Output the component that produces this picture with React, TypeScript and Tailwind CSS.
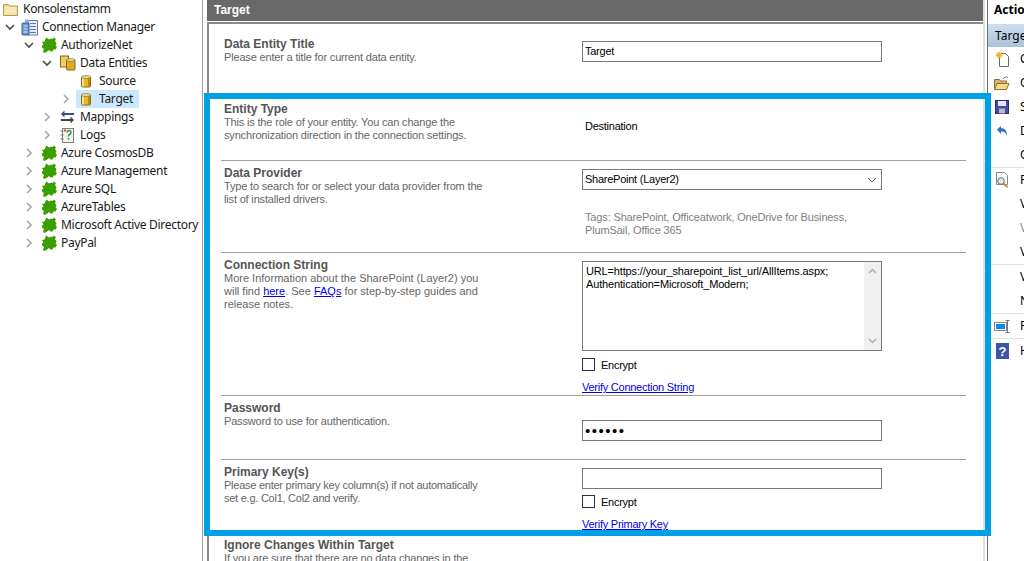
import React from "react";

const Chevron = ({ open }: { open?: boolean }) => (
  <svg width="10" height="10" viewBox="0 0 10 10" fill="none" strokeWidth="1.6" stroke={open ? "#4a4a4a" : "#a6a6a6"}>
    {open ? <path d="M1 3l4 4 4-4" /> : <path d="M3 1l4 4-4 4" />}
  </svg>
);

const Puzzle = () => (
  <svg width="16" height="16" viewBox="0 0 16 16">
    <path
      fill="#3c9f00"
      d="M5.500 0.500l2.500 2 2-1 1.500 0.500 1.500-1.500 2 2-1 1.500 1.500 2.500-1 2 1.500 1.500-1.500 2.500-2 0-1 2-2 0-1.500-1.500-2.500 2-2.500 1-1-1.500 1-2.500-2-1.500 0-2 1.500-1-1.500-2.500 2.500-0.500 1-2.500z"
    />
  </svg>
);

const Db = () => (
  <svg width="10" height="13" viewBox="0 0 10 13">
    <rect x="0.500" y="1.500" width="9" height="10.500" rx="1" fill="#e8b820" stroke="#7d6a2a" />
    <rect x="1" y="2" width="2" height="9.500" fill="#f8e38c" />
    <rect x="7" y="2" width="2" height="9.500" fill="#c08a10" />
    <ellipse cx="5" cy="2" rx="4.500" ry="1.400" fill="#f7e6a0" stroke="#7d6a2a" strokeWidth="0.700" />
  </svg>
);

const DbPair = () => (
  <svg width="16" height="16" viewBox="0 0 16 16">
    <rect x="0.500" y="1" width="8" height="11" fill="#f2cf5a" stroke="#7d6a2a" />
    <rect x="6.500" y="4.500" width="8.500" height="10.500" rx="1" fill="#e3ac1c" stroke="#7d6a2a" />
    <ellipse cx="10.800" cy="5" rx="4.200" ry="1.300" fill="#f7e6a0" stroke="#7d6a2a" strokeWidth="0.700" />
  </svg>
);

const Folder = () => (
  <svg width="15" height="14" viewBox="0 0 15 14">
    <path d="M0.500 2.500h5l1.500 1.500h7.500v9.500h-14z" fill="#f5d98a" stroke="#b59a55" />
    <rect x="1.500" y="5" width="12" height="7.500" fill="#fae9b5" />
  </svg>
);

const Conn = () => (
  <svg width="17" height="17" viewBox="0 0 17 17">
    <rect x="7.500" y="1.500" width="9" height="14.500" fill="#e6ecf5" stroke="#6a7fa5" />
    <path d="M9 4.500h6M9 7.500h6M9 10.500h6M9 13.500h6" stroke="#5b77b5" />
    <path d="M4 0.500h4v3h-4z" fill="#8fb0e0" />
    <rect x="1" y="4" width="7" height="12" rx="1" fill="#6f96d6" stroke="#3b5a95" />
    <path d="M2.500 7h4M2.500 10h4M2.500 13h4" stroke="#d9e5f7" />
  </svg>
);

const Mappings = () => (
  <svg width="15" height="14" viewBox="0 0 15 14">
    <path d="M14 4H3" stroke="#33507f" strokeWidth="2" />
    <path d="M4.500 0.500L1 4l3.500 3.500z" fill="#33507f" />
    <path d="M1 10h11" stroke="#444" strokeWidth="2" />
    <path d="M10.500 6.500L14 10l-3.500 3.500z" fill="#444" />
  </svg>
);

const Logs = () => (
  <svg width="14" height="15" viewBox="0 0 14 15">
    <rect x="2.500" y="0.500" width="11" height="14" fill="#f4f4f0" stroke="#808080" />
    <path d="M0.500 3h3M0.500 7h3M0.500 11h3" stroke="#777" />
    <path d="M7 4.500a2 2 0 1 1 2.500 2c-.8.400-1 1-1 2" fill="none" stroke="#2f9a2f" strokeWidth="1.500" />
    <rect x="7.800" y="10" width="1.500" height="1.700" fill="#2f9a2f" />
    <rect x="4" y="1.500" width="2" height="2" fill="#d94b3a" />
  </svg>
);

type RowProps = {
  pl: string;
  chevron?: "open" | "closed";
  icon: React.ReactNode;
  label: string;
  selected?: boolean;
  iconClass: string;
  cell?: string;
};

const TreeRow = ({ pl, chevron, icon, label, selected, iconClass, cell = "w-[22px]" }: RowProps) => (
  <div className={`flex h-[18px] items-center ${pl}`}>
    <div className="flex w-[20px] shrink-0 items-center justify-center">
      {chevron && <Chevron open={chevron === "open"} />}
    </div>
    <div className={`flex h-[18px] items-center pr-[6px] ${selected ? "bg-[#cce8ff]" : ""}`}>
      <div className={`flex ${cell} shrink-0 items-center ${iconClass}`}>{icon}</div>
      <span className="whitespace-nowrap">{label}</span>
    </div>
  </div>
);

const small = "text-[11px] tracking-[-0.25px]";

const Field = ({ title, h, children, right, pt = "pt-[6px]", track = "tracking-[-0.17px]" }: { title: string; h: string; children: React.ReactNode; right: React.ReactNode; pt?: string; track?: string }) => (
  <div className={`flex ${h} shrink-0 border-b border-[#a0a0a0]`}>
    <div className={`w-[361px] shrink-0 pl-[3px] ${pt}`}>
      <div className="text-[12px] font-bold leading-[13px] text-[#555555]">{title}</div>
      <div className={`w-[264px] text-[11px] ${track} leading-[13px] text-[#666666]`}>{children}</div>
    </div>
    <div className="w-[300px] shrink-0">{right}</div>
  </div>
);

const boxText = `h-[21px] w-[300px] border border-[#7a7a7a] bg-white px-[2px] leading-[19px] text-black outline-none`;

const Encrypt = ({ mt }: { mt: string }) => (
  <label className={`flex h-[13px] items-center gap-[6px] ${mt}`}>
    <span className="h-[13px] w-[13px] border border-[#333333] bg-white" />
    <span className={`${small} mt-[2px] text-black`}>Encrypt</span>
  </label>
);

const LinkText = ({ children, mt }: { children: React.ReactNode; mt: string }) => (
  <a href="#" className={`block ${small} leading-[13px] text-[#0000ee] underline ${mt}`}>{children}</a>
);

const FloppyIcon = () => (
  <svg width="14" height="14" viewBox="0 0 14 14">
    <rect x="0.500" y="0.500" width="13" height="13" fill="#4a4aa5" stroke="#2a2a70" />
    <rect x="3" y="1" width="8" height="5" fill="#e8e8f5" />
    <rect x="4" y="8.500" width="6" height="5" fill="#b8b8c8" />
  </svg>
);

const actionRows: { text: string; icon?: React.ReactNode; grey?: boolean; sep?: boolean }[] = [
  {
    text: "Create",
    icon: (
      <svg width="15" height="16" viewBox="0 0 15 16">
        <path d="M4.500 2.500h6l3 3v10h-9z" fill="#fff" stroke="#667" />
        <path d="M4 0l1 2 2-1-1 2 2 1.500-2 .5 1 2-2-1-1 2-1-2-2 1 1-2-2-.5 2-1.500-1-2 2 1z" fill="#f6b820" />
      </svg>
    ),
  },
  {
    text: "Open",
    icon: (
      <svg width="16" height="15" viewBox="0 0 16 15">
        <path d="M0.500 3.500h5l1 1.500h6v8.500h-12z" fill="#d8b868" stroke="#8a7235" />
        <path d="M3 7.500h12l-2.500 6h-12z" fill="#f6d98a" stroke="#8a7235" />
        <path d="M9 3c1-2 3-2.500 5-1.500" fill="none" stroke="#5b77a5" />
      </svg>
    ),
  },
  { text: "Save", icon: <FloppyIcon /> },
  {
    text: "Discard",
    icon: (
      <svg width="12" height="12" viewBox="0 0 12 12">
        <path d="M1 4.500L5 1v2.300c4 0 6 2.500 6 7.700-1-3.500-2.500-4.500-6-4.500V9z" fill="#2f6fc0" />
      </svg>
    ),
  },
  { text: "Open", sep: true },
  {
    text: "Preview",
    icon: (
      <svg width="15" height="16" viewBox="0 0 15 16">
        <path d="M1.500 0.500h8l3 3v9h-11z" fill="#fff" stroke="#888" />
        <circle cx="6" cy="9" r="3.300" fill="#dfe9f5" stroke="#6a6a6a" />
        <path d="M8.500 11.500l4 3.500" stroke="#c08a30" strokeWidth="2" />
      </svg>
    ),
  },
  { text: "Validate" },
  { text: "Verify", grey: true },
  { text: "View", sep: true },
  { text: "View" },
  { text: "New", sep: true },
  {
    text: "Refresh",
    sep: true,
    icon: (
      <svg width="16" height="13" viewBox="0 0 16 13">
        <rect x="0.500" y="2.500" width="12" height="8" fill="#fff" stroke="#888" />
        <rect x="2" y="4" width="9" height="5" fill="#1187f0" />
        <path d="M11.500 0.500h4M11.500 12.500h4M13.500 0.500v12" stroke="#777" />
      </svg>
    ),
  },
  {
    text: "Help",
    icon: (
      <svg width="13" height="16" viewBox="0 0 13 16">
        <rect width="13" height="16" fill="#3b55a8" />
        <text x="6.500" y="12.500" textAnchor="middle" fontSize="13" fontWeight="700" fill="#fff" fontFamily="Liberation Sans, sans-serif">?</text>
      </svg>
    ),
  },
];

export default function App() {
  return (
    <div className="relative flex h-[561px] w-[1024px] overflow-hidden bg-white font-['Liberation_Sans',Arial,sans-serif]">
      {/* Tree */}
      <div className="h-full w-[202px] shrink-0 overflow-hidden font-['Noto_Sans','Open_Sans',sans-serif] text-[12px] leading-[18px] tracking-[-0.3px] text-[#1a1a1a]">
        <div className="flex h-[18px] items-center pl-[3px]">
          <div className="flex w-[20px] shrink-0 items-center"><Folder /></div>
          <span>Konsolenstamm</span>
        </div>
        <TreeRow pl="pl-0" chevron="open" icon={<Conn />} iconClass="pl-[1px]" label="Connection Manager" />
        <TreeRow pl="pl-[19px]" chevron="open" icon={<Puzzle />} iconClass="pl-[2px]" label="AuthorizeNet" />
        <TreeRow pl="pl-[37px]" chevron="open" icon={<DbPair />} iconClass="pl-[3px]" cell="w-[23px]" label="Data Entities" />
        <TreeRow pl="pl-[56px]" icon={<Db />} iconClass="pl-[5px]" cell="w-[23px]" label="Source" />
        <TreeRow pl="pl-[56px]" chevron="closed" icon={<Db />} iconClass="pl-[5px]" cell="w-[23px]" label="Target" selected />
        <TreeRow pl="pl-[37px]" chevron="closed" icon={<Mappings />} iconClass="pl-[3px]" cell="w-[23px]" label="Mappings" />
        <TreeRow pl="pl-[37px]" chevron="closed" icon={<Logs />} iconClass="pl-[3px]" cell="w-[23px]" label="Logs" />
        {["Azure CosmosDB", "Azure Management", "Azure SQL", "AzureTables", "Microsoft Active Directory", "PayPal"].map((t) => (
          <TreeRow key={t} pl="pl-[19px]" chevron="closed" icon={<Puzzle />} iconClass="pl-[2px]" label={t} />
        ))}
      </div>

      {/* Splitter */}
      <div className="h-full w-[5px] shrink-0 border-l border-[#a0a0a0] bg-white" />

      {/* Main */}
      <div className="flex h-full w-[776px] shrink-0 flex-col overflow-hidden">
        <div className="h-[21px] shrink-0 bg-[#696969] pl-[7px] text-[12px] font-bold leading-[20px] text-white">Target</div>
        <div className="mt-px flex-1 overflow-hidden border-l-2 border-t-2 border-[#8a8a8a] pl-[12px] pr-[17px] pt-[8px]">
          <Field
            title="Data Entity Title"
            h="h-[65px]"
            right={<input readOnly value="Target" className={`${boxText} ${small} mt-[9px] block pb-[2px]`} />}
          >
            Please enter a title for current data entity.
          </Field>
          <Field
            title="Entity Type"
            h="h-[64px]"
            right={<div className={`mt-[22px] pl-[3px] ${small} leading-[14px] text-black`}>Destination</div>}
          >
            This is the role of your entity. You can change the synchronization direction in the connection settings.
          </Field>
          <Field
            title="Data Provider"
            h="h-[92px]"
            right={
              <div>
                <div className={`${boxText} ${small} mt-[8px] flex items-center justify-between pr-[4px]`}>
                  <span>SharePoint (Layer2)</span>
                  <svg width="10" height="6" viewBox="0 0 10 6" fill="none" stroke="#555"><path d="M1 1l4 4 4-4" /></svg>
                </div>
                <div className="mt-[21px] pl-[3px] text-[11px] leading-[13px] tracking-[-0.15px] text-[#808080]">
                  Tags: SharePoint, Officeatwork, OneDrive for Business, PlumSail, Office 365
                </div>
              </div>
            }
          >
            Type to search for or select your data provider from the list of installed drivers.
          </Field>
          <Field
            title="Connection String"
            h="h-[143px]"
            track="tracking-[0px]"
            right={
              <div>
                <div className="mt-[8px] flex h-[90px] w-[300px] border border-[#7a7a7a] bg-white">
                  <div className="flex-1 pl-[3px] pt-[3px] text-[11px] leading-[13px] tracking-[-0.15px] text-black">
                    URL=https://your_sharepoint_list_url/AllItems.aspx; <br />Authentication=Microsoft_Modern;
                  </div>
                  <div className="flex w-[17px] flex-col items-center justify-between bg-[#f0f0f0] py-[6px]">
                    <svg width="9" height="6" viewBox="0 0 9 6" fill="none" stroke="#b0b0b0" strokeWidth="1.500"><path d="M1 5l3.500-3.500L8 5" /></svg>
                    <svg width="9" height="6" viewBox="0 0 9 6" fill="none" stroke="#b0b0b0" strokeWidth="1.500"><path d="M1 1l3.500 3.500L8 1" /></svg>
                  </div>
                </div>
                <Encrypt mt="mt-[7px]" />
                <LinkText mt="mt-[10px]">Verify Connection String</LinkText>
              </div>
            }
          >
            More Information about the SharePoint (Layer2) you<br />will find <a href="#" className="text-[#0000ee] underline">here</a>. See <a href="#" className="text-[#0000ee] underline">FAQs</a> for step-by-step guides and release notes.
          </Field>
          <Field
            title="Password"
            h="h-[64px]"
            right={<input readOnly type="password" value="abcdef" className={`${boxText} mt-[24px] block text-[15px] tracking-[1.5px]`} />}
          >
            Password to use for authentication.
          </Field>
          <Field
            title="Primary Key(s)"
            h="h-[73px]"
            track="tracking-[-0.25px]"
            right={
              <div>
                <input readOnly className={`${boxText} ${small} mt-[8px] block`} />
                <Encrypt mt="mt-[6px]" />
                <LinkText mt="mt-[10px]">Verify Primary Key</LinkText>
              </div>
            }
          >
            Please enter primary key column(s) if not automatically set e.g. Col1, Col2 and verify.
          </Field>
          <Field title="Ignore Changes Within Target" h="h-[60px]" right={<div />}>
            If you are sure that there are no data changes in the
          </Field>
        </div>
      </div>

      {/* Scroll gutter */}
      <div className="h-full w-[5px] shrink-0 border-l-2 border-r border-l-[#e0e0e0] border-r-[#6a6a6a] bg-white" />

      {/* Actions */}
      <div className="h-full flex-1 overflow-hidden font-['Noto_Sans',sans-serif] text-[12px] text-black">
        <div className="h-[24px] pl-[6px] text-[12px] font-bold leading-[20px]">Actions</div>
        <div className="h-[23px] bg-gradient-to-b from-[#cfdff0] to-[#a9c1dc] pl-[7px] text-[12px] leading-[23px]">Target</div>
        {actionRows.map((r, i) => (
          <div key={i} className={r.sep ? "border-b border-[#e2e2e2]" : ""}>
            <div className="flex h-[24px] items-center pl-[6px]">
              <div className="flex w-[16px] shrink-0 items-center justify-center">{r.icon}</div>
              <span className={`ml-[10px] whitespace-nowrap ${r.grey ? "text-[#8a8a8a]" : ""}`}>{r.text}</span>
            </div>
          </div>
        ))}
      </div>

      {/* Highlight frame */}
      <div className="pointer-events-none absolute left-[204px] top-[93px] h-[443px] w-[787px] border-[6px] border-[#00a0e4]" />
    </div>
  );
}
